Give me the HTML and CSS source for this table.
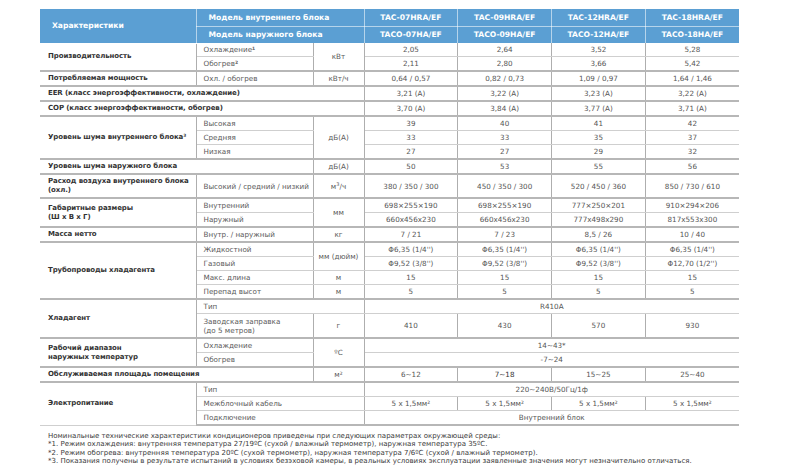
FILE: index.html
```html
<!DOCTYPE html>
<html lang="ru">
<head>
<meta charset="utf-8">
<title>Характеристики</title>
<link rel="stylesheet" href="styles.css">
</head>
<body>
<div class="page">
<table class="spec">
<colgroup>
<col class="c1"><col class="c2"><col class="c3"><col class="cv"><col class="cv"><col class="cv"><col class="cv">
</colgroup>
<thead>
<tr class="h1">
<th rowspan="2" class="hl">Характеристики</th>
<th colspan="2" class="hl2">Модель внутреннего блока</th>
<th>TAC-07HRA/EF</th><th>TAC-09HRA/EF</th><th>TAC-12HRA/EF</th><th>TAC-18HRA/EF</th>
</tr>
<tr class="h2">
<th colspan="2" class="hl2">Модель наружного блока</th>
<th>TACO-07HA/EF</th><th>TACO-09HA/EF</th><th>TACO-12HA/EF</th><th>TACO-18HA/EF</th>
</tr>
</thead>
<tbody>
<tr class="m">
<td rowspan="2" class="lab">Производительность</td><td class="sub">Охлаждение<b>¹</b></td><td rowspan="2" class="u">кВт</td>
<td>2,05</td><td>2,64</td><td>3,52</td><td>5,28</td>
</tr>
<tr>
<td class="sub">Обогрев<b>²</b></td><td>2,11</td><td>2,80</td><td>3,66</td><td>5,42</td>
</tr>
<tr class="m">
<td class="lab">Потребляемая мощность</td><td class="sub">Охл. / обогрев</td><td class="u">кВт/ч</td>
<td>0,64 / 0,57</td><td>0,82 / 0,73</td><td>1,09 / 0,97</td><td>1,64 / 1,46</td>
</tr>
<tr class="m">
<td colspan="3" class="lab">EER (класс энергоэффективности, охлаждение)</td>
<td>3,21 (A)</td><td>3,22 (A)</td><td>3,23 (A)</td><td>3,22 (A)</td>
</tr>
<tr class="m">
<td colspan="3" class="lab">COP (класс энергоэффективности, обогрев)</td>
<td>3,70 (A)</td><td>3,84 (A)</td><td>3,77 (A)</td><td>3,71 (A)</td>
</tr>
<tr class="m">
<td rowspan="3" class="lab">Уровень шума внутреннего блока³</td><td class="sub">Высокая</td><td rowspan="3" class="u">дБ(А)</td>
<td>39</td><td>40</td><td>41</td><td>42</td>
</tr>
<tr><td class="sub">Средняя</td><td>33</td><td>33</td><td>35</td><td>37</td></tr>
<tr><td class="sub">Низкая</td><td>27</td><td>27</td><td>29</td><td>32</td></tr>
<tr class="m">
<td colspan="2" class="lab">Уровень шума наружного блока</td><td class="u">дБ(А)</td>
<td>50</td><td>53</td><td>55</td><td>56</td>
</tr>
<tr class="m dbl">
<td class="lab">Расход воздуха внутреннего блока<br>(охл.)</td><td class="sub">Высокий / средний / низкий</td><td class="u">м<sup>3</sup>/ч</td>
<td>380 / 350 / 300</td><td>450 / 350 / 300</td><td>520 / 450 / 360</td><td>850 / 730 / 610</td>
</tr>
<tr class="m">
<td rowspan="2" class="lab">Габаритные размеры<br>(Ш х В х Г)</td><td class="sub">Внутренний</td><td rowspan="2" class="u">мм</td>
<td>698×255×190</td><td>698×255×190</td><td>777×250×201</td><td>910×294×206</td>
</tr>
<tr><td class="sub">Наружный</td><td>660x456x230</td><td>660x456x230</td><td>777x498x290</td><td>817x553x300</td></tr>
<tr class="m">
<td class="lab">Масса нетто</td><td class="sub">Внутр. / наружный</td><td class="u">кг</td>
<td>7 / 21</td><td>7 / 23</td><td>8,5 / 26</td><td>10 / 40</td>
</tr>
<tr class="m">
<td rowspan="4" class="lab">Трубопроводы хладагента</td><td class="sub">Жидкостной</td><td rowspan="2" class="u">мм (дюйм)</td>
<td>Φ6,35 (1/4'')</td><td>Φ6,35 (1/4'')</td><td>Φ6,35 (1/4'')</td><td>Φ6,35 (1/4'')</td>
</tr>
<tr><td class="sub">Газовый</td><td>Φ9,52 (3/8'')</td><td>Φ9,52 (3/8'')</td><td>Φ9,52 (3/8'')</td><td>Φ12,70 (1/2'')</td></tr>
<tr><td class="sub">Макс. длина</td><td class="u">м</td><td>15</td><td>15</td><td>15</td><td>15</td></tr>
<tr><td class="sub">Перепад высот</td><td class="u">м</td><td>5</td><td>5</td><td>5</td><td>5</td></tr>
<tr class="m">
<td rowspan="2" class="lab">Хладагент</td><td colspan="2" class="sub">Тип</td><td colspan="4">R410A</td>
</tr>
<tr class="dbl2">
<td class="sub">Заводская заправка<br>(до 5 метров)</td><td class="u">г</td><td>410</td><td>430</td><td>570</td><td>930</td>
</tr>
<tr class="m">
<td rowspan="2" class="lab">Рабочий диапазон<br>наружных температур</td><td class="sub">Охлаждение</td><td rowspan="2" class="u">ºС</td><td colspan="4">14~43*</td>
</tr>
<tr><td class="sub">Обогрев</td><td colspan="4">-7~24</td></tr>
<tr class="m">
<td colspan="2" class="lab">Обслуживаемая площадь помещения</td><td class="u">м²</td>
<td>6~12</td><td class="dk">7~18</td><td>15~25</td><td>25~40</td>
</tr>
<tr class="m">
<td rowspan="3" class="lab">Электропитание</td><td colspan="2" class="sub">Тип</td><td colspan="4">220~240В/50Гц/1ф</td>
</tr>
<tr><td colspan="2" class="sub">Межблочный кабель</td><td>5 x 1,5мм²</td><td>5 x 1,5мм²</td><td>5 x 1,5мм²</td><td>5 x 1,5мм²</td></tr>
<tr class="last"><td colspan="2" class="sub">Подключение</td><td colspan="4">Внутренний блок</td></tr>
</tbody>
</table>
<div class="notes">
<p>Номинальные технические характеристики кондиционеров приведены при следующих параметрах окружающей среды:</p>
<p>*1. Режим охлаждения: внутренняя температура 27/19ºС (сухой / влажный термометр), наружная температура 35ºС.</p>
<p>*2. Режим обогрева: внутренняя температура 20ºС (сухой термометр), наружная температура 7/6ºС (сухой / влажный термометр).</p>
<p>*3. Показания получены в результате испытаний в условиях безэховой камеры, в реальных условиях эксплуатации заявленные значения могут незначительно отличаться.</p>
</div>
</div>
</body>
</html>
```

FILE: styles.css
```css
html, body {
  margin: 0;
  padding: 0;
  background: #ffffff;
}
body {
  font-family: "DejaVu Sans", "Noto Sans", sans-serif;
  color: #555555;
}
.page {
  padding: 9px 0 0 40px;
}
.spec {
  width: 699px;
  table-layout: fixed;
  border-collapse: collapse;
  font-size: 7.2px;
}
.c1 { width: 156px; }
.c2 { width: 117px; }
.c3 { width: 51px; }
.cv { width: 93.75px; }

.spec th {
  background: #5b9fd3;
  color: #ffffff;
  font-weight: bold;
  font-size: 7.6px;
  height: 16.5px;
  line-height: 9px;
  padding: 0;
  text-align: center;
  border: 1px solid rgba(255, 255, 255, 0.55);
  border-top: none;
}
.spec thead tr:first-child th:first-child {
  border-left: none;
}
.spec thead th:last-child {
  border-right: none;
}
.spec th.hl {
  text-align: left;
  padding-left: 12px;
}
.spec th.hl2 {
  text-align: left;
  padding-left: 12px;
}
.spec .h2 th {
  border-bottom: none;
}

.spec td {
  height: 13px;
  padding: 0;
  line-height: 9px;
  text-align: center;
  vertical-align: middle;
  border: 1px solid #aeaeae;
  border-top-color: #cfcfcf;
  border-bottom-color: #cfcfcf;
}
.spec td:first-child {
  border-left: none;
}
.spec td:last-child {
  border-right: none;
}
.spec tr.m td {
  border-top: 2px solid #b7b7b7;
}
.spec tbody tr:first-child td {
  border-top: none;
}
.spec tr.last td {
  border-bottom: 2px solid #b7b7b7;
}
.spec tr.dbl td {
  height: 22px;
}
.spec tr.dbl2 td {
  height: 23px;
}
.spec td.lab {
  text-align: left;
  padding-left: 8px;
  font-size: 7px;
  letter-spacing: -0.1px;
  font-weight: 600;
  color: #333333;
}
.spec td.sub {
  text-align: left;
  padding-left: 7px;
  color: #5a5a5a;
}
.spec td.sub b {
  font-weight: bold;
}
.spec td.u {
  color: #5a5a5a;
}
.spec td.dk {
  color: #333333;
}
.spec sup {
  font-size: 5px;
  line-height: 0;
}
.notes {
  margin-top: 6px;
  padding-left: 8px;
  font-size: 7px;
  line-height: 8.3px;
  color: #3a3a3a;
}
.notes p {
  margin: 0;
}
```
